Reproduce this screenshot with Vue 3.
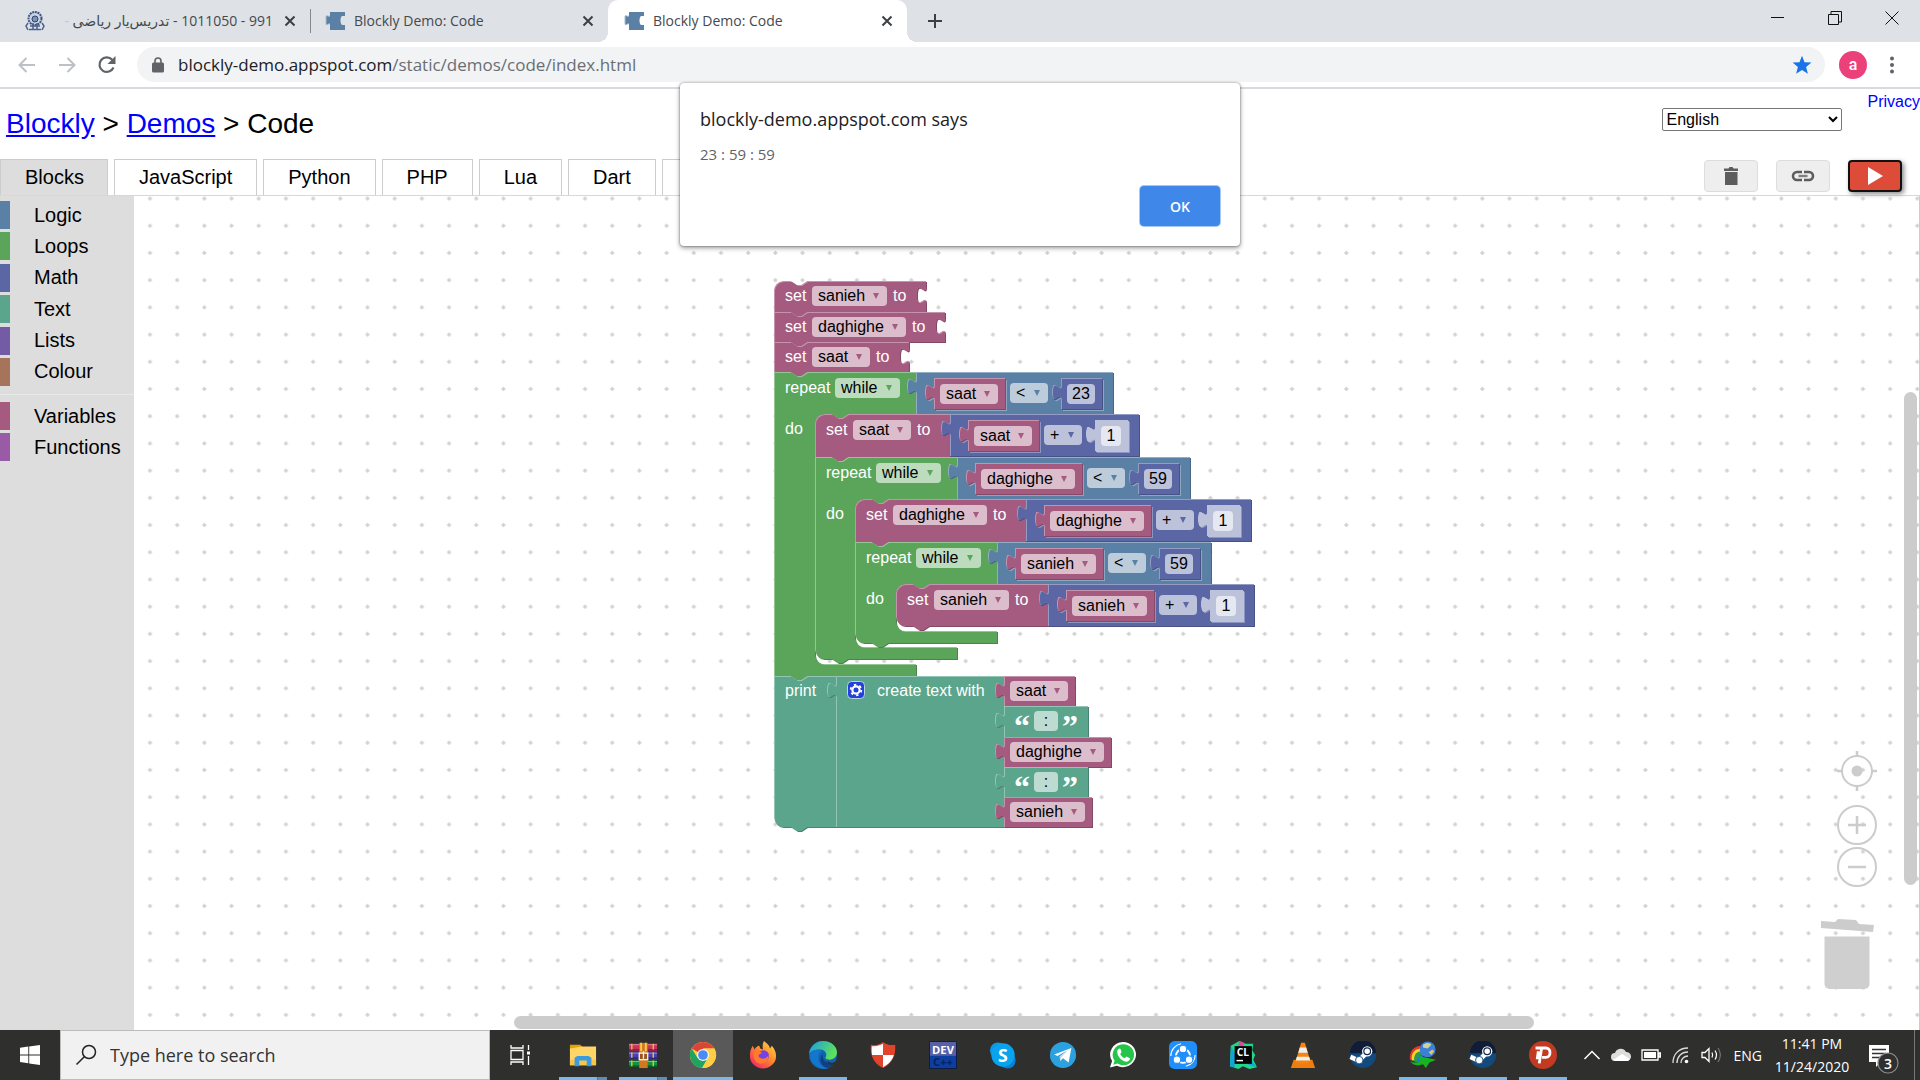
<script setup>
const tabs = ['Blocks', 'JavaScript', 'Python', 'PHP', 'Lua', 'Dart', 'XML']

const categories = [
  { name: 'Logic', color: '#5b80a5' },
  { name: 'Loops', color: '#5ba55b' },
  { name: 'Math', color: '#5b67a5' },
  { name: 'Text', color: '#5ba58c' },
  { name: 'Lists', color: '#745ba5' },
  { name: 'Colour', color: '#a5745b' },
]
const moreCategories = [
  { name: 'Variables', color: '#a55b80' },
  { name: 'Functions', color: '#995ba5' },
]

const LOGIC = '#5b80a5'
const LOOPS = '#5ba55b'
const MATH = '#5b67a5'
const TEXT = '#5ba58c'
const VARS = '#a55b80'
const SHADOW = '#bdc2db'

const shapes = []
const labels = []
const fields = []

const varWidth = { sanieh: 75, daghighe: 94, saat: 58 }

const label = (x, y, text) => labels.push({ x, y, text })
const dropdown = (x, y, w, text, color) => fields.push({ kind: 'select', x, y, w, text, color })
const entry = (x, y, w, text) => fields.push({ kind: 'input', x, y, w, text })
const shape = (d, color, inline = false) => shapes.push({ d, color, inline })

const topEdge = (x, y, round) =>
  (round ? `M${x},${y + 9}a9,9 0 0 1 9,-9` : `M${x},${y}`) + `H${x + 17}l6,4h4l6,-4`
const bottomEdge = (x, y, round) =>
  `H${x + 33}l-6,4h-4l-6,-4` + (round ? `H${x + 9}a9,9 0 0 1 -9,-9z` : `H${x}z`)
const socket = 'v6c0,11 -9,-9 -9,8s9,-3 9,8'

function valueShape(x, y, w, h, color, inline) {
  shape(`M${x},${y}h${w}v${h}h${-w}V${y + 22}c0,-11 -9,9 -9,-8s9,3 9,-8z`, color, inline)
}
function variable(x, y, h, name, inline) {
  const w = varWidth[name]
  valueShape(x, y, w + 13, h, VARS, inline)
  dropdown(x + 6, y + (inline ? 6 : 5), w, name, VARS)
}
function binary(x, y, name, op, number, color) {
  const w = varWidth[name]
  const n = number.length === 2 ? 28 : 20
  const opX = x + 18 + w + 13 + 5
  const numX = opX + 38 + 13
  valueShape(x, y, numX + n + 13 + 11 - x, 42, color)
  variable(x + 18, y + 6, 31, name, true)
  dropdown(opX, y + 11, 38, op, color)
  valueShape(numX, y + 6, n + 13, 31, number === '1' ? SHADOW : MATH, true)
  entry(numX + 6, y + 12, n, number)
}
function setter(x, y, h, name, { first = false, last = false, open = false } = {}) {
  const w = varWidth[name]
  const right = x + w + 77
  const row = y + (open ? 5 : 6)
  shape(`${topEdge(x, y, first)}H${right}${open ? socket : ''}V${y + h}${bottomEdge(x, y + h, last)}`, VARS)
  label(x + 11, row, 'set')
  dropdown(x + 38, row, w, name, VARS)
  label(x + 38 + w + 6, row, 'to')
  return right
}
function loop(x, y, inner, foot, last) {
  const right = x + 142
  const end = foot + 12
  shape(
    `${topEdge(x, y, false)}H${right}V${y + 42}H${inner + 33}l-6,4h-4l-6,-4H${inner + 9}` +
      `a9,9 0 0 0 -9,9V${foot - 9}a9,9 0 0 0 9,9H${right}V${end}${bottomEdge(x, end, last)}`,
    LOOPS
  )
  label(x + 11, y + 6, 'repeat')
  dropdown(x + 61, y + 6, 65, 'while', LOOPS)
  label(x + 11, y + 47, 'do')
  return right
}

setter(0, 0, 31, 'sanieh', { first: true, open: true })
setter(0, 31, 30, 'daghighe', { open: true })
setter(0, 61, 30, 'saat', { open: true })
binary(loop(0, 91, 41, 383, false), 91, 'saat', '<', '23', LOGIC)
binary(setter(41, 133, 43, 'saat', { first: true }), 133, 'saat', '+', '1', MATH)
binary(loop(41, 176, 81, 366, true), 176, 'daghighe', '<', '59', LOGIC)
binary(setter(81, 218, 43, 'daghighe', { first: true }), 218, 'daghighe', '+', '1', MATH)
binary(loop(81, 261, 122, 350, true), 261, 'sanieh', '<', '59', LOGIC)
binary(setter(122, 303, 42, 'sanieh', { first: true, last: true }), 303, 'sanieh', '+', '1', MATH)

shape(`${topEdge(0, 395, false)}H62V546${bottomEdge(0, 546, true)}`, TEXT)
label(11, 400, 'print')
valueShape(62, 395, 168, 151, TEXT)
label(103, 400, 'create text with')
const joined = [
  { y: 395, h: 30, name: 'saat' },
  { y: 425, h: 31 },
  { y: 456, h: 30, name: 'daghighe' },
  { y: 486, h: 30 },
  { y: 516, h: 30, name: 'sanieh' },
]
const quotes = []
for (const row of joined) {
  if (row.name) {
    variable(230, row.y, row.h, row.name, false)
  } else {
    valueShape(230, row.y, 84, row.h, TEXT)
    entry(260, row.y + 5, 24, ':')
    quotes.push({ x: 240, y: row.y + 6, text: '“' }, { x: 288, y: row.y + 6, text: '”' })
  }
}

function mix(hex, target, amount) {
  const parts = [1, 3, 5].map((i) => parseInt(hex.slice(i, i + 2), 16))
  return `rgb(${parts.map((v) => Math.round(v + (target - v) * amount)).join(',')})`
}
const dark = (c) => (c === SHADOW ? c : mix(c, 0, 0.2))
const light = (c) => mix(c, 255, c === SHADOW ? 0 : 0.35)
</script>

<template>
  <div class="screen">
    <header class="tabstrip">
      <div class="btab first">
        <svg class="fav" viewBox="0 0 20 20"><circle cx="10" cy="7.500" r="6.500" fill="#c9d2e2" stroke="#3f5580" stroke-width="2" stroke-dasharray="2 .7" /><circle cx="10" cy="8" r="3" fill="#7f91b3" stroke="#2f4470" /><path d="M3 12l-2 3 2 4M17 12l2 3-2 4M5 15h10M4 18.500h12M8 12v7M12 12v7" stroke="#4c6290" stroke-width="1.500" fill="none" /></svg>
        <span class="btitle rtl" dir="rtl">991 - 1011050 - تدریس‌یار ریاضی <i>-</i></span>
        <button class="x" aria-label="Close tab"><svg viewBox="0 0 12 12"><path d="M1.500 1.500l9 9M10.500 1.500l-9 9" /></svg></button>
      </div>
      <div class="btab second">
        <svg class="fav" viewBox="0 0 20 20"><path d="M5 1h15v4h-3c-2 1-2 8 0 9h3v5H5v-6c-2-1-4 3-4-1V6c0-3 2 0 4-1z" fill="#5b80a5" /><path d="M5 5c-2 1-4-2-4 1v6c0 4 2 0 4 1" fill="none" stroke="#a9bdd2" /></svg>
        <span class="btitle">Blockly Demo: Code</span>
        <button class="x" aria-label="Close tab"><svg viewBox="0 0 12 12"><path d="M1.500 1.500l9 9M10.500 1.500l-9 9" /></svg></button>
      </div>
      <div class="btab active">
        <svg class="fav" viewBox="0 0 20 20"><path d="M5 1h15v4h-3c-2 1-2 8 0 9h3v5H5v-6c-2-1-4 3-4-1V6c0-3 2 0 4-1z" fill="#5b80a5" /><path d="M5 5c-2 1-4-2-4 1v6c0 4 2 0 4 1" fill="none" stroke="#a9bdd2" /></svg>
        <span class="btitle">Blockly Demo: Code</span>
        <button class="x" aria-label="Close tab"><svg viewBox="0 0 12 12"><path d="M1.500 1.500l9 9M10.500 1.500l-9 9" /></svg></button>
      </div>
      <button class="newtab" aria-label="New tab"><svg viewBox="0 0 16 16"><path d="M8 1v14M1 8h14" /></svg></button>
      <div class="winctl">
        <button aria-label="Minimize"><svg viewBox="0 0 14 14"><path d="M0 6.500h13" /></svg></button>
        <button aria-label="Restore"><svg viewBox="0 0 14 14"><path d="M.5 3.500h10v10H.5zM3 3V.5h10.500v10.500H11" /></svg></button>
        <button aria-label="Close"><svg viewBox="0 0 14 14"><path d="M.5 .5l13 13M13.500 .5l-13 13" /></svg></button>
      </div>
    </header>

    <nav class="toolbar">
      <button class="nav" aria-label="Back"><svg viewBox="0 0 20 20"><path d="M18 10H3M9.500 3L2.500 10l7 7" fill="none" stroke="#bdc0c4" stroke-width="2" /></svg></button>
      <button class="nav" aria-label="Forward"><svg viewBox="0 0 20 20"><path d="M2 10h15M10.500 3l7 7-7 7" fill="none" stroke="#bdc0c4" stroke-width="2" /></svg></button>
      <button class="nav" aria-label="Reload"><svg viewBox="0 0 20 20"><path d="M16.500 12.500a7.300 7.300 0 1 1-1.300-7.800" fill="none" stroke="#5f6368" stroke-width="2.200" /><path d="M18.500 1v8h-8z" fill="#5f6368" /></svg></button>
      <div class="omnibox">
        <svg class="lock" viewBox="0 0 12 16"><path d="M3 7V4a3 3 0 0 1 6 0v3" fill="none" stroke="#5f6368" stroke-width="1.600" /><rect x="0" y="5.500" width="12" height="10" rx="1.500" fill="#5f6368" /></svg>
        <span class="url">blockly-demo.appspot.com<i>/static/demos/code/index.html</i></span>
        <svg class="star" viewBox="0 0 20 20"><path d="M10 .8l2.500 6.400 6.900.4-5.300 4.400 1.800 6.800L10 15l-5.900 3.800L5.900 12 .6 7.600l6.900-.4z" fill="#1a73e8" /></svg>
      </div>
      <button class="avatar">a</button>
      <button class="kebab" aria-label="Menu"><svg viewBox="0 0 6 20"><circle cx="3" cy="3.500" r="2" /><circle cx="3" cy="10" r="2" /><circle cx="3" cy="16.500" r="2" /></svg></button>
    </nav>

    <main class="page">
      <div class="head">
        <h1><a href="#">Blockly</a> &gt; <a href="#">Demos</a> &gt; Code</h1>
        <select class="lang" aria-label="Language"><option>English</option></select>
        <a class="privacy" href="#">Privacy</a>
      </div>

      <div class="tabrow">
        <button v-for="(t, i) in tabs" :key="t" class="tab" :class="{ on: i === 0 }">{{ t }}</button>
        <div class="actions">
          <button class="act" aria-label="Discard all blocks"><svg viewBox="0 0 20 20"><path d="M3 2.500h4.500l1-1.500h3l1 1.500H17V5H3zM4 6h12.500v13H4z" fill="#5c5c5c" /></svg></button>
          <button class="act" aria-label="Save and link to blocks"><svg class="wide" viewBox="0 0 24 20"><path d="M11 6H6a4 4 0 0 0 0 8h5M13 6h5a4 4 0 0 1 0 8h-5" fill="none" stroke="#5c5c5c" stroke-width="2.600" /><path d="M7.500 10h9" stroke="#808080" stroke-width="2.400" /></svg></button>
          <button class="act run" aria-label="Run program"><svg viewBox="0 0 20 20"><path d="M3 1l15 9-15 9z" fill="#fff" /></svg></button>
        </div>
      </div>

      <div class="editor">
        <aside class="toolbox">
          <ul class="cats">
            <li v-for="c in categories" :key="c.name"><b :style="{ background: c.color }"></b>{{ c.name }}</li>
          </ul>
          <hr />
          <ul class="cats more">
            <li v-for="c in moreCategories" :key="c.name"><b :style="{ background: c.color }"></b>{{ c.name }}</li>
          </ul>
        </aside>

        <section class="workspace">
          <svg class="grid">
            <defs>
              <pattern id="dots" x="2" y="-11" width="27.190" height="27.210" patternUnits="userSpaceOnUse">
                <path d="M12 13.500h4M14 11.500v4" stroke="#d6d6d6" stroke-width="1.500" /><circle cx="14" cy="13.500" r="1.600" fill="#d2d2d2" />
              </pattern>
            </defs>
            <rect width="100%" height="100%" fill="url(#dots)" />
          </svg>

          <div class="blocks">
            <svg class="shapes" width="500" height="560">
              <g v-for="(s, i) in shapes" :key="i">
                <clipPath :id="'block' + i"><path :d="s.d" /></clipPath>
                <path v-if="s.inline" :d="s.d" transform="translate(2 2)" fill="#fff" fill-opacity=".3" />
                <path :d="s.d" transform="translate(1 1)" :fill="dark(s.color)" />
                <g :clip-path="`url(#block${i})`">
                  <path :d="s.d" :fill="light(s.color)" />
                  <path :d="s.d" transform="translate(1 1)" :fill="s.color" />
                </g>
              </g>
              <g transform="translate(73 400)">
                <rect x=".5" y=".5" width="17" height="17" rx="4" fill="#2340d8" stroke="#b9d6e0" />
                <circle cx="9" cy="9" r="3.600" fill="none" stroke="#fff" stroke-width="2.200" />
                <circle cx="9" cy="9" r="5.300" fill="none" stroke="#fff" stroke-width="1.800" stroke-dasharray="2.400 3.150" />
              </g>
            </svg>
            <span v-for="(l, i) in labels" :key="'l' + i" class="label" :style="{ left: l.x + 'px', top: l.y + 'px' }">{{ l.text }}</span>
            <template v-for="(f, i) in fields" :key="'f' + i">
              <span v-if="f.kind === 'select'" class="field" :style="{ left: f.x + 'px', top: f.y + 'px', width: f.w + 'px' }">
                <select :aria-label="f.text"><option>{{ f.text }}</option></select>
                <svg viewBox="0 0 6 6"><path d="M0 0h6L3 6z" :fill="f.color" /></svg>
              </span>
              <input v-else class="field" :value="f.text" :aria-label="f.text" :style="{ left: f.x + 'px', top: f.y + 'px', width: f.w + 'px' }" />
            </template>
            <span v-for="(q, i) in quotes" :key="'q' + i" class="quote" :style="{ left: q.x + 'px', top: q.y + 'px' }">{{ q.text }}</span>
          </div>

          <svg class="controls" viewBox="0 0 60 250" width="60" height="250">
            <g fill="none" stroke="#ccc" stroke-width="2">
              <circle cx="40" cy="26" r="15" />
              <path d="M40 6v6M40 40v6M20 26h6M54 26h6" stroke-width="2.500" />
              <circle cx="40" cy="80" r="19" />
              <path d="M31 80h18M40 71v18" stroke-width="2.500" />
              <circle cx="40" cy="122" r="19" />
              <path d="M31 122h18" stroke-width="2.500" />
            </g>
            <circle cx="40" cy="26" r="5.500" fill="#ccc" />
            <path d="M4 176l14 1 3-3 18 1 3 4 15 1-1 7-52-4z" fill="#ccc" />
            <path d="M7.500 191.500h45V239a5 5 0 0 1-5 5h-35a5 5 0 0 1-5-5z" fill="#ccc" fill-opacity=".95" />
          </svg>
          <div class="vbar"></div>
          <div class="hbar"></div>
        </section>
      </div>
    </main>

    <div class="dialog" role="dialog">
      <h2>blockly-demo.appspot.com says</h2>
      <p>23 : 59 : 59</p>
      <button>OK</button>
    </div>

    <footer class="taskbar">
      <button class="start" aria-label="Start"><svg viewBox="0 0 20 20"><path d="M0 2.800l8.300-1.200v7.900H0zM9.200 1.400L20 0v9.500H9.200zM0 10.400h8.300v7.900L0 17.100zM9.200 10.400H20V20L9.200 18.500z" fill="#fff" /></svg></button>
      <label class="search">
        <svg viewBox="0 0 22 22"><circle cx="14" cy="8" r="6.500" fill="none" stroke="#222" stroke-width="1.500" /><path d="M9.300 12.700L1.500 20.500" stroke="#222" stroke-width="1.500" /></svg>
        <input placeholder="Type here to search" />
      </label>
      <button class="app" aria-label="Task view"><svg class="small" viewBox="0 0 20 20"><path d="M1 0v3h12V0M1 20v-3h12v3M1 5.500h12v9H1zM18.500 0v5M18.500 11v9" fill="none" stroke="#fff" stroke-width="1.300" /><rect x="17" y="6.500" width="3" height="3" fill="#fff" /></svg></button>

      <button class="app many" aria-label="File Explorer"><svg viewBox="0 0 30 30"><path d="M1 4h11l3 3v4H1z" fill="#e8a200" /><path d="M1 8l13-2h15v20H1z" fill="#ffd567" /><path d="M1 20h28v6H1z" fill="#f7c548" /><path d="M6 26v-8l3-2h12l3 2v9h-5v-6h-8v6H6z" fill="#3a9be0" /></svg></button>
      <button class="app many" aria-label="WinRAR"><svg viewBox="0 0 30 30"><path d="M0 3h30v8H0z" fill="#c9325c" /><path d="M0 12h30v8H0z" fill="#4a3fb3" /><path d="M0 21h30v7H0z" fill="#149140" /><path d="M0 4h30M0 13h30M0 22h30" stroke="#fff" stroke-opacity=".45" /><path d="M0 9.500h30M0 18.500h30M0 27h30" stroke="#000" stroke-opacity=".35" stroke-width="2" /><path d="M3 3v25M26 3v25" stroke="#e8c12e" stroke-width="1.500" stroke-dasharray="6 3" /><path d="M11 2h9v27h-9z" fill="#d4781e" /><path d="M13 2v9M18 2v9" stroke="#f7cf4b" stroke-width="2" /><rect x="11" y="13" width="9" height="7" fill="#9b5318" stroke="#eee" stroke-width="1.500" /><path d="M15.500 11v8" stroke="#eee" stroke-width="1.500" /></svg></button>
      <button class="app current" aria-label="Chrome"><svg viewBox="0 0 30 30"><circle cx="15" cy="15" r="14" fill="#ffce44" /><path d="M15 15L2.900 8A14 14 0 0 1 27.100 8H15z" fill="#dc4437" /><path d="M2.900 8A14 14 0 0 0 14 29l6.500-11L9 18z" fill="#1da462" /><path d="M15 8h12.100A14 14 0 0 1 14 29l6.500-11z" fill="#ffce44" /><circle cx="15" cy="15" r="6.500" fill="#f4f4f4" /><circle cx="15" cy="15" r="5.200" fill="#4a8af4" /></svg></button>
      <button class="app" aria-label="Firefox"><svg viewBox="0 0 30 30"><defs><linearGradient id="fx" x1="1" y1="0" x2=".2" y2="1"><stop offset="0" stop-color="#ffe14d" /><stop offset=".5" stop-color="#ff8a2a" /><stop offset="1" stop-color="#f0256b" /></linearGradient></defs><path d="M16 0c4 3 6 5 6.500 8l2-3C28 9 29 13 29 16a14 13.500 0 0 1-28 0C1 11 2 8 4 5l2 4c1-2 3-4 5-4l1 3 3 1c-1-4 0-7 1-9z" fill="url(#fx)" /><circle cx="15.500" cy="16" r="6" fill="#7542e5" /><path d="M5 13c3-3 7-2 9 0-2 0-3 1-4 3 3 5 9 3 11-1 0 7-5 10-10 9-4-1-7-6-6-11z" fill="#ff7a2a" /></svg></button>
      <button class="app open" aria-label="Edge"><svg viewBox="0 0 30 30"><defs><linearGradient id="ed" x1="0" y1="0" x2="1" y2=".4"><stop offset="0" stop-color="#1a9be6" /><stop offset="1" stop-color="#5fe05b" /></linearGradient></defs><circle cx="15" cy="15" r="15" fill="#0f63b4" /><path d="M0 14C1 5 8 0 15 0c9 0 15 6 15 12 0 5-4 8-8 8-3 0-5-1-4-3 2-3-1-8-6-8C6 9 1 11 0 14z" fill="url(#ed)" /><path d="M10 17c-1 6 4 12 11 13-9 1-21-5-20-16 2-5 9-6 13-3-2 1-4 3-4 6z" fill="#1577cc" /><path d="M15 14c-2 6 4 12 13 9 1 0 1 1 0 2-3 3-7 4-10 3-6-2-8-9-3-14z" fill="#103f82" /><path d="M19 21c3 3 8 3 11 0v5l-2 0c-4 0-8-2-9-5z" fill="#30302f" /></svg></button>
      <button class="app" aria-label="Shield"><svg viewBox="0 0 30 30"><path d="M15 1c4 3 8 4 13 3 1 12-3 20-13 25C5 24 1 16 2 4c5 1 9 0 13-3z" fill="#e1442a" /><path d="M15 3v12H3.300C2.800 12 2.800 9 3 5.500c5 .5 8-.5 12-2.500zM15 15h11.500C25 20.500 21 25 15 28z" fill="#fff" /></svg></button>
      <button class="app" aria-label="Dev-C++"><svg viewBox="0 0 30 30"><rect width="30" height="30" rx="2" fill="#101a3c" /><rect x="1" y="1" width="28" height="15" fill="#5661a8" /><rect x="1" y="16" width="28" height="13" fill="#0d3ea0" /><text x="15" y="14" class="dev" fill="#fff">DEV</text><text x="15" y="27" class="dev" fill="#06225e">C++</text></svg></button>
      <button class="app" aria-label="Skype"><svg viewBox="0 0 30 30"><circle cx="9.500" cy="10" r="8.500" fill="#0a9be8" /><circle cx="20" cy="21" r="8.500" fill="#0a7fd6" /><circle cx="15" cy="15" r="12.500" fill="#0aa3ee" /><text x="15" y="22" class="sk" fill="#fff">S</text></svg></button>
      <button class="app" aria-label="Telegram"><svg viewBox="0 0 30 30"><circle cx="15" cy="15" r="14" fill="#2ba2df" /><path d="M5.500 14.500L24 7.500 21 23l-6-4.500-3 3-.5-5L20 10l-11 6z" fill="#fff" /><path d="M11.500 16.500L20 10l-6.500 7.500L12 21.500z" fill="#c5dcec" /></svg></button>
      <button class="app" aria-label="WhatsApp"><svg viewBox="0 0 30 30"><path d="M15 1a14 13.500 0 1 1-6.500 25.500L1 28.500l2.300-7A14 13.500 0 0 1 15 1z" fill="#fff" /><path d="M15 3.500A11.500 11.300 0 1 1 9 24.200l-4.300 1.200L6 21.200A11.500 11.300 0 0 1 15 3.500z" fill="#25c54a" /><path d="M9 10c1-2 3-3 3.500-1l1 3-1.500 2c1 2 2.500 3.500 5 4.500l1.500-2 4 2c0 3-3 4-5.500 3.500C12 20.500 8 15 9 10z" fill="#fff" /></svg></button>
      <button class="app" aria-label="SHAREit"><svg viewBox="0 0 30 30"><rect width="30" height="30" rx="6" fill="#1e8ffb" /><circle cx="15" cy="16" r="7.500" fill="none" stroke="#fff" stroke-width="2" /><path d="M2 16C2 9 7 4 13 3M28 15c0 6-4 11-10 12" fill="none" stroke="#fff" stroke-width="1.200" /><g fill="#fff" stroke="#1e8ffb" stroke-width="1.200"><circle cx="15" cy="8.500" r="4" /><circle cx="8.500" cy="20" r="4" /><circle cx="21.500" cy="20" r="4" /></g></svg></button>
      <button class="app" aria-label="CLion"><svg viewBox="0 0 30 30"><path d="M2 5l9-5 7 3 8 0-1 7 3 5-2 5 4 8-8 2-7-3-5 3-9-3z" fill="#21d789" /><path d="M2 5l5 10-1 13-5-1zM20 25l9 3-6-9z" fill="#12a5d5" /><path d="M11 0l5 2-1 5-5-2z" fill="#e5489b" /><rect x="6" y="5.500" width="18.500" height="19" fill="#050505" /><text x="15" y="16" class="cl" fill="#fff">CL</text><path d="M8 21h7" stroke="#fff" stroke-width="1.600" /></svg></button>
      <button class="app" aria-label="VLC"><svg viewBox="0 0 30 30"><path d="M5 20h20l3 9H2z" fill="#f07c0b" /><path d="M13 2h4l6 20c-2 3-14 3-16 0z" fill="#f58410" /><path d="M11.600 7h6.800l1.700 5.500H9.900zM8.400 17h13.200l1.200 4H7.200z" fill="#eee" /></svg></button>
      <button class="app" aria-label="Steam"><svg viewBox="0 0 30 30"><circle cx="15" cy="15" r="14" fill="#124a7e" /><path d="M1 13a14 14 0 0 1 28 0z" fill="#111d38" /><path d="M1.500 17l9 4 8-8" stroke="#fff" stroke-width="5" fill="none" /><circle cx="19.500" cy="11" r="5.500" fill="#fff" /><circle cx="19.500" cy="11" r="3.600" fill="none" stroke="#15284d" stroke-width="1.300" /><circle cx="11" cy="20.500" r="4" fill="#fff" stroke="#124a7e" /></svg></button>
      <button class="app open" aria-label="Internet Download Manager"><svg viewBox="0 0 30 30"><path d="M1 20C0 11 5 5 14 5v4c-5 0-8 4-7 11z" fill="#e33b2b" /><path d="M3 21C2 13 6 8 14 8v4c-4 0-6 4-5 9z" fill="#f5d62a" /><path d="M6 23c-2-8 2-12 8-12v4c-3 0-4 4-3 8z" fill="#2a9a4e" /><path d="M9 24c-1-6 1-9 6-9v8z" fill="#2a73e0" /><circle cx="20" cy="9" r="8.500" fill="#3d7fd8" /><path d="M15 4c4-3 8-2 9 0l-4 4-5-1z" fill="#c8d59a" /><path d="M21 12l4-3 2 2-3 4z" fill="#d9c96b" /><path d="M1 21c3 3 7 3 11 1l-2-6 19 4-7 3-4 6-3-4C10 27 4 27 1 21z" fill="#14b51d" /></svg></button>
      <button class="app open" aria-label="Steam game"><svg viewBox="0 0 30 30"><circle cx="15" cy="15" r="14" fill="#124a7e" /><path d="M1 13a14 14 0 0 1 28 0z" fill="#111d38" /><path d="M1.500 17l9 4 8-8" stroke="#fff" stroke-width="5" fill="none" /><circle cx="19.500" cy="11" r="5.500" fill="#fff" /><circle cx="19.500" cy="11" r="3.600" fill="none" stroke="#15284d" stroke-width="1.300" /><circle cx="11" cy="20.500" r="4" fill="#fff" stroke="#124a7e" /></svg></button>
      <button class="app open" aria-label="Psiphon"><svg viewBox="0 0 30 30"><circle cx="15" cy="15" r="15" fill="#c23a22" /><path d="M7 7.500h11c6 0 6 10 0 10h-4M13.500 7.500L11 24M10 11l-1 7h4" fill="none" stroke="#fff" stroke-width="3" /></svg></button>

      <div class="tray">
        <svg viewBox="0 0 18 18" width="18"><path d="M1.500 13L9 5.500l7.500 7.500" fill="none" stroke="#fff" stroke-width="1.500" /></svg>
        <svg viewBox="0 0 20 18" width="20"><path d="M4 15a4 4 0 0 1 0-8 6 6 0 0 1 11-1 4.500 4.500 0 0 1 1 9z" fill="#ddd" /><path d="M2 14l9-6 8 5-2 2H4z" fill="#fff" /></svg>
        <svg viewBox="0 0 20 18" width="20"><path d="M1 4h16v10H1zM18 7h1.500v4H18z" fill="none" stroke="#fff" stroke-width="1.300" /><rect x="3" y="6" width="12" height="6" fill="#fff" /></svg>
        <svg viewBox="0 0 20 18" width="20"><g fill="none" stroke="#ddd" stroke-width="1.300"><path d="M2 17C2 8 8 2 17 2M6 17c0-6 4-11 11-11M10 17c0-4 3-7 7-7" /></g><circle cx="15.500" cy="15.500" r="1.800" fill="#fff" /></svg>
        <svg viewBox="0 0 20 18" width="20"><path d="M1 6.500h3l4-4v13l-4-4H1z" fill="none" stroke="#fff" stroke-width="1.300" /><path d="M11 6.500c1 2 1 3 0 5M14 4.500c2 3 2 6 0 9" fill="none" stroke="#fff" stroke-width="1.200" /><path d="M17 2c3 5 3 9 0 14" fill="none" stroke="#888" /></svg>
        <span class="eng">ENG</span>
        <span class="clock">11:41 PM<br />11/24/2020</span>
        <svg class="note" viewBox="0 0 32 32" width="32" height="32"><path d="M1 3h20v17h-8l-5 5v-5H1z" fill="#fff" /><path d="M4 7.500h14M4 11.500h14M4 15.500h9" stroke="#333" stroke-width="1.500" /><circle cx="20" cy="21" r="10" fill="#2f2f2f" stroke="#8a8a8a" stroke-width="1.200" /><text x="20" y="26.500" class="three" fill="#fff">3</text></svg>
        <span class="peek"></span>
      </div>
    </footer>
  </div>
</template>

<style>
body { margin: 0; }
</style>

<style scoped>
* { box-sizing: border-box; }
button { border: 0; padding: 0; background: none; font: inherit; color: inherit; }
svg { display: block; flex: none; }
.screen {
  position: relative;
  display: flex;
  flex-direction: column;
  min-height: 100vh;
  overflow: hidden;
  background: #fff;
  font-family: "Liberation Sans", Arial, sans-serif;
}

.tabstrip {
  display: flex;
  height: 42px;
  background: #dee1e6;
  font: 14px "Open Sans", "Noto Sans", sans-serif;
  color: #45494d;
}
.btab { display: flex; align-items: center; position: relative; padding: 0 14px 0 16px; width: 299px; }
.btab.first { width: 311px; padding-left: 25px; }
.btab.first::after { content: ""; position: absolute; right: 0; top: 9px; width: 1px; height: 24px; background: #85888d; }
.btab.second { width: 297px; padding-left: 14px; }
.btab.active { background: #fff; border-radius: 10px 10px 0 0; }
.btab.active::before, .btab.active::after {
  content: ""; position: absolute; bottom: 0; width: 10px; height: 10px;
}
.btab.active::before { left: -10px; background: radial-gradient(circle at 0 0, #dee1e6 10px, #fff 10px); }
.btab.active::after { right: -10px; background: radial-gradient(circle at 100% 0, #dee1e6 10px, #fff 10px); }
.fav { width: 20px; height: 20px; margin-right: 9px; }
.btitle { flex: 1; padding-bottom: 2px; white-space: nowrap; }
.rtl { flex: none; width: 219px; margin-right: 11px; font-family: "Open Sans", "DejaVu Sans", sans-serif; }
.rtl i { font-style: normal; color: #c3c7cd; }
.x svg { width: 12px; height: 12px; stroke: #3c4043; stroke-width: 2; }
.newtab { margin-left: 20px; }
.newtab svg { width: 16px; height: 16px; stroke: #3c4043; stroke-width: 2; }
.winctl { display: flex; margin-left: auto; }
.winctl button { display: flex; justify-content: center; width: 57px; padding-top: 11px; }
.winctl svg { width: 14px; height: 14px; fill: none; stroke: #111; stroke-width: 1; }

.toolbar { display: flex; align-items: center; height: 47px; padding: 0 21px 0 17px; border-bottom: 2px solid #d8dae0; }
.nav { margin-right: 20px; }
.nav svg { width: 20px; height: 20px; }
.omnibox { display: flex; align-items: center; flex: 1; height: 35px; padding: 0 13px 0 15px; border-radius: 18px; background: #f1f3f4; }
.lock { width: 12px; height: 16px; margin-right: 14px; }
.url { flex: 1; font: 17px "Open Sans", "Noto Sans", sans-serif; color: #202124; white-space: nowrap; }
.url i { font-style: normal; color: #6a6e73; }
.star { width: 20px; height: 20px; }
.avatar { width: 28px; height: 28px; margin: 0 18px 0 14px; border-radius: 50%; background: #ec407a; color: #fff; font: 500 16px Roboto, sans-serif; }
.kebab { width: 14px; display: flex; justify-content: center; }
.kebab svg { width: 6px; height: 20px; fill: #5f6368; }

.page { flex: 1; display: flex; flex-direction: column; }
.head { display: flex; align-items: flex-start; height: 70px; }
.head h1 { flex: 1; margin: 19px 0 0 6px; font-size: 28px; line-height: 32px; font-weight: 400; }
.head h1 a { color: #00f; }
.lang { width: 180px; height: 23px; margin: 19px 26px 0 0; border: 1px solid #767676; border-radius: 2px; background: #fff; font: 16px "Liberation Sans", Arial, sans-serif; color: #000; }
.privacy { margin-top: 3px; font-size: 16px; line-height: 20px; color: #00f; text-decoration: none; }
.tabrow { display: flex; height: 37px; border-bottom: 1px solid #d8d8d8; }
.tab { height: 36px; margin-right: 6px; padding: 0 24px; border: 1px solid #ccc; border-bottom: 0; background: #fff; font-size: 20px; color: #000; }
.tab.on { padding: 0 23px 0 24px; background: #ddd; }
.actions { display: flex; gap: 18px; margin: 1px 18px 0 auto; }
.act { display: flex; align-items: center; justify-content: center; width: 54px; height: 32px; border: 1px solid #ddd; border-radius: 4px; background: #eee; }
.act svg { width: 20px; height: 20px; }
.act .wide { width: 24px; }
.run { border: 2px solid #111; background: #dd4b39; box-shadow: 2px 2px 5px #888; }

.editor { flex: 1; display: flex; }
.toolbox { width: 134px; padding-top: 5px; background: #ddd; font-size: 20px; }
.cats { display: flex; flex-direction: column; justify-content: space-between; height: 185px; margin: 0; padding: 0; list-style: none; }
.cats.more { height: 59px; }
.cats li { display: flex; align-items: center; height: 28px; white-space: nowrap; }
.cats b { width: 10px; height: 28px; margin-right: 24px; }
.toolbox hr { height: 1px; margin: 8px 0 7px; border: 0; background: #e8e8e8; }
.workspace { position: relative; flex: 1; border-right: 1px solid #ccc; overflow: hidden; }
.grid { position: absolute; width: 100%; height: 100%; }
.blocks { position: absolute; left: 640px; top: 85px; font-size: 16px; }
.shapes { overflow: visible; }
.label { position: absolute; line-height: 20px; color: #fff; white-space: nowrap; }
.field { position: absolute; height: 20px; border-radius: 4px; background: rgba(255, 255, 255, 0.6); }
.field select { display: block; width: 100%; height: 20px; padding: 0 0 0 6px; border: 0; appearance: none; background: none; font: 16px/20px "Liberation Sans", Arial, sans-serif; color: #000; }
.field svg { position: absolute; right: 8px; top: 7px; width: 6px; height: 6px; pointer-events: none; }
input.field { padding: 0; border: 0; text-align: center; font: 16px/20px "Liberation Sans", Arial, sans-serif; color: #000; }
.quote { position: absolute; width: 13px; height: 14px; font: bold 32px/28px "Liberation Serif", serif; color: #fff; }
.controls { position: absolute; right: 42px; bottom: 35px; }
.vbar { position: absolute; right: 2px; top: 196px; width: 13px; height: 493px; border-radius: 7px; background: #ccc; }
.hbar { position: absolute; left: 380px; right: 385px; bottom: 1px; height: 13px; border-radius: 7px; background: #ccc; }

.dialog {
  position: absolute;
  left: calc(50% - 280px);
  top: 83px;
  width: 560px;
  height: 163px;
  padding: 24px 20px;
  border-radius: 4px;
  background: #fff;
  box-shadow: 0 0 2px rgba(0, 0, 0, 0.5), 0 2px 5px rgba(0, 0, 0, 0.4);
  font-family: "Open Sans", "Noto Sans", sans-serif;
}
.dialog h2 { margin: 0; font-size: 18px; line-height: 24px; font-weight: 400; color: #202124; }
.dialog p { margin: 13px 0 0; font-size: 15px; line-height: 20px; color: #5f6368; }
.dialog button { position: absolute; right: 20px; bottom: 20px; width: 80px; height: 40px; border-radius: 4px; background: #3f88ea; box-shadow: 0 0 0 1px #a5c8f8; color: #fff; font-size: 14px; font-weight: 600; }

.taskbar { display: flex; height: 50px; background: #2f2f2e; font-family: "Open Sans", "Noto Sans", sans-serif; color: #fff; }
.start { display: flex; align-items: center; justify-content: center; width: 60px; }
.start svg { width: 20px; height: 20px; }
.search { display: flex; align-items: center; width: 430px; padding-left: 14px; border: 1px solid #bcbcbc; background: #f1f1f1; }
.search svg { width: 22px; height: 22px; margin-right: 13px; }
.search input { flex: 1; min-width: 0; padding: 0; border: 0; background: none; font: 18px "Open Sans", "Noto Sans", sans-serif; }
.search input::placeholder { color: #333; opacity: 1; }
.app { position: relative; display: flex; align-items: center; justify-content: center; width: 60px; }
.app[aria-label="Task view"] { margin-right: 3px; }
.app svg { width: 28px; height: 28px; }
.app .small { width: 20px; height: 20px; }
.open::after, .many::after, .current::after { content: ""; position: absolute; left: 6px; right: 6px; bottom: 0; height: 3px; background: #76b9ed; }
.many::after { background: linear-gradient(to right, #76b9ed 38px, #3c5f7c 38px, #5c8fb8 39px); }
.current { background: #595959; }
.current::after { left: 0; right: 0; }
.dev { font: bold 12px "Open Sans", sans-serif; text-anchor: middle; }
.sk { font: bold 19px "Open Sans", sans-serif; text-anchor: middle; }
.cl { font: bold 11px "Open Sans", sans-serif; text-anchor: middle; }
.three { font: 600 14px "Open Sans", sans-serif; text-anchor: middle; }
.tray { display: flex; align-items: center; gap: 10px; margin-left: auto; }
.eng { margin-left: 3px; font-size: 14px; }
.clock { margin-left: 2px; width: 76px; text-align: center; font-size: 14px; line-height: 23px; white-space: nowrap; }
.note { margin: 6px 0 0 8px; }
.peek { width: 6px; height: 50px; margin-left: 4px; border-left: 1px solid #777; }
</style>
